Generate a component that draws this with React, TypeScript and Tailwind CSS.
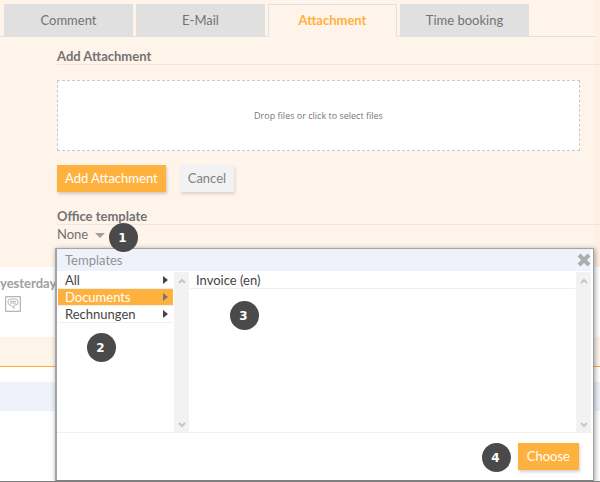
import { useState } from 'react'
import clsx from 'clsx'

const TABS = ['Comment', 'E-Mail', 'Attachment', 'Time booking']
const FOLDERS = ['All', 'Documents', 'Rechnungen']

function Marker({ n, className }: { n: number; className: string }) {
  return (
    <span
      className={clsx(
        'absolute z-20 flex size-[29px] items-center justify-center rounded-full bg-[#4a4a4a] pr-0.5 font-["DejaVu_Sans",sans-serif] text-[12px] font-bold text-white',
        className,
      )}
    >
      {n}
    </span>
  )
}

function Chevron({ down = false }: { down?: boolean }) {
  return (
    <svg viewBox="0 0 8 6" className="h-[6px] w-[8px]" fill="none" stroke="#c6c6c6" strokeWidth="2">
      <path d={down ? 'M1 1 L4 4 L7 1' : 'M1 5 L4 2 L7 5'} />
    </svg>
  )
}

function ScrollBar() {
  return (
    <div className="flex w-[15px] shrink-0 flex-col items-center justify-between bg-[#f2f2f2] pt-[6px] pb-1">
      <Chevron />
      <Chevron down />
    </div>
  )
}

function TemplateMenu() {
  const [folder, setFolder] = useState('Documents')

  return (
    <div className="absolute -inset-x-0.5 top-[23px] z-10 mr-2 border border-b-2 border-l-2 border-[#a0a3a8] border-b-[#7f7f7f] bg-white shadow-[1px_1px_5px_rgba(0,0,0,0.4)]">
      <div className="mr-0.5 flex h-[23px] items-center justify-between border-b border-white bg-[#eff2fa] pl-2">
        <h3 className="text-[13px] leading-4 text-[#909297]">Templates</h3>
        <button type="button" aria-label="Close" className="cursor-pointer">
          <svg viewBox="0 0 14 14" className="size-[14px]" stroke="#adadad" strokeWidth="4.2">
            <path d="M2 2 L12 12 M12 2 L2 12" />
          </svg>
        </button>
      </div>

      <div className="mr-0.5 flex h-[161px] border-b border-[#f0f0f0]">
        <ul className="mr-px ml-px w-[115px] shrink-0">
          {FOLDERS.map(name => (
            <li key={name}>
              <button
                type="button"
                onClick={() => setFolder(name)}
                className={clsx(
                  'flex h-[17px] w-full cursor-pointer items-center justify-between border-b border-[#eeeeee] pr-[5px] pl-[7px] text-[13px] leading-4',
                  name === folder ? 'bg-[#ffb13d] text-white' : 'text-[#444444]',
                )}
              >
                {name}
                <svg viewBox="0 0 5 8" className={clsx('h-[8px] w-[5px]', name === folder ? 'fill-[#777777]' : 'fill-[#444444]')}>
                  <path d="M0 0 L5 4 L0 8 Z" />
                </svg>
              </button>
            </li>
          ))}
        </ul>
        <ScrollBar />
        <ul className="mx-px min-w-0 flex-1">
          <li>
            <button
              type="button"
              className="flex h-[17px] w-full cursor-pointer items-center border-b border-[#eeeeee] pl-1.5 text-[13px] leading-4 text-[#444444]"
            >
              Invoice (en)
            </button>
          </li>
        </ul>
        <ScrollBar />
      </div>

      <div className="flex justify-end pt-[10px] pr-[14px] pb-[10px]">
        <button
          type="button"
          className="h-[27px] cursor-pointer bg-[#ffb13d] px-[9px] text-[13px] text-white shadow-[1px_2px_3px_rgba(0,0,0,0.18)]"
        >
          Choose
        </button>
      </div>

      <Marker n={2} className="top-[84px] left-[30px]" />
      <Marker n={3} className="top-[52px] left-[173px]" />
      <Marker n={4} className="right-[82px] bottom-[8px]" />
    </div>
  )
}

export default function App() {
  const [active, setActive] = useState('Attachment')

  return (
    <div className="overflow-hidden border-b border-[#7f7f7f] bg-white font-[Lato,'Open_Sans',sans-serif] text-[13px] text-[#737373]">
      <section className="h-[267px] border-r-[5px] border-[#fff0e3] bg-[#fff4e9] pt-1">
        <div role="tablist" className="flex border-b border-[#dce3e8] pl-1">
          {TABS.map(tab => (
            <button
              key={tab}
              type="button"
              role="tab"
              aria-selected={tab === active}
              onClick={() => setActive(tab)}
              className={clsx(
                '-mb-px mr-[3px] h-[33px] w-[129px] cursor-pointer border',
                tab === active
                  ? 'border-[#dde2e6] border-b-[#fff4e9] font-bold text-[#ffb13d]'
                  : 'border-[#e0e0e0] border-b-[#dce3e8] bg-[#e0e0e0]',
              )}
            >
              {tab}
            </button>
          ))}
        </div>

        <div className="-mr-[5px] pt-[11px] pl-[57px]">
          <h2 className="h-[17px] border-b border-[#ebe7e3] leading-4 font-bold">Add Attachment</h2>
          <button
            type="button"
            className="mt-[15px] mr-5 flex h-[71px] w-[calc(100%-20px)] cursor-pointer items-center justify-center border border-dashed border-[#c9c9c9] bg-white font-['Open_Sans',sans-serif] text-[9px] text-[#777777]"
          >
            Drop files or click to select files
          </button>

          <div className="mt-[14px] flex gap-[14px]">
            <button
              type="button"
              className="h-[27px] cursor-pointer bg-[#ffb13d] px-2 text-white shadow-[1px_2px_3px_rgba(0,0,0,0.18)]"
            >
              Add Attachment
            </button>
            <button
              type="button"
              className="h-[27px] cursor-pointer bg-[#f2f2f2] px-2 text-[#808080] shadow-[1px_2px_3px_rgba(0,0,0,0.14)]"
            >
              Cancel
            </button>
          </div>

          <h2 className="mt-4 h-[17px] border-b border-[#ebe7e3] leading-4 font-bold">Office template</h2>
          <div className="relative">
            <button type="button" aria-haspopup="true" className="flex h-5 cursor-pointer items-center gap-[7px]">
              None
              <svg viewBox="0 0 10 5" className="h-[5px] w-[10px] fill-[#a0a0a0]">
                <path d="M0 0 L10 0 L5 5 Z" />
              </svg>
            </button>
            <Marker n={1} className="-top-[2px] left-[52px]" />
            <TemplateMenu />
          </div>
        </div>
      </section>

      <section className="h-[70px] bg-white pt-2">
        <p className="leading-4 font-bold text-[#a0a0a0]">yesterday</p>
        <svg viewBox="0 0 16 16" className="mt-[5px] ml-[5px] size-4" fill="none" stroke="#b5b5b5">
          <rect x="0.5" y="0.5" width="15" height="15" rx="1.5" strokeWidth="1.4" />
          <path d="M5.5 3h5q2.5 0 2.5 2.5v1q0 2.5-2.5 2.5L9 9.3v3.2L6.2 9.3Q3 9.3 3 6.5v-1Q3 3 5.5 3Z" />
          <path d="M5 5.3h6M5 7h6" />
        </svg>
      </section>
      <div className="h-[30px] border-b border-[#ffac35] bg-[#fff4e9]" />
      <div className="mt-[15px] h-[29px] bg-[#eff2fa]" />
      <div className="h-[70px]" />
    </div>
  )
}
